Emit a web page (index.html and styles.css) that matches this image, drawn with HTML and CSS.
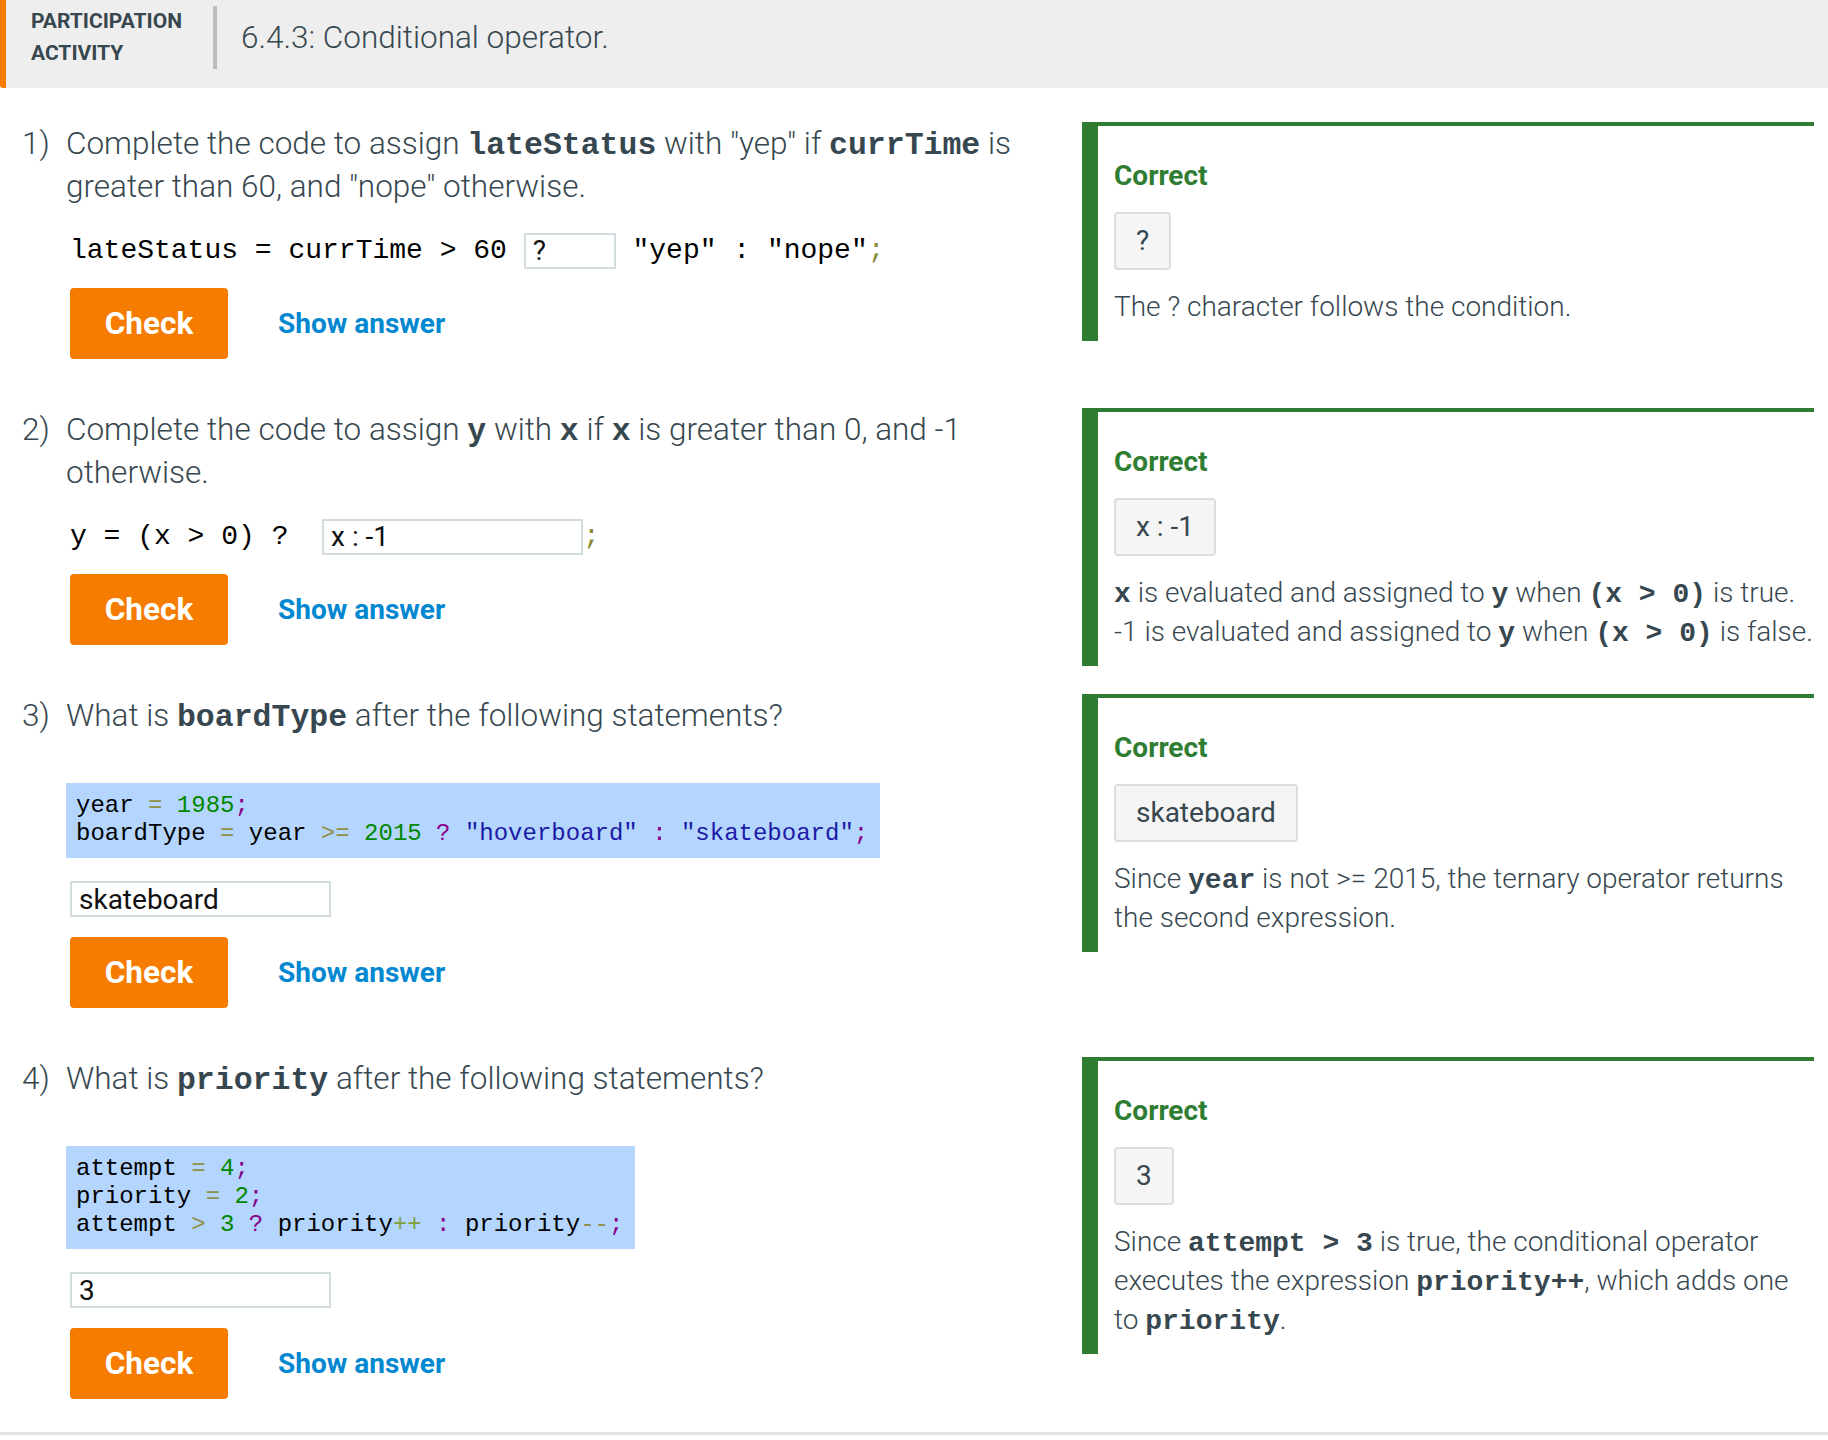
FILE: index.html
```html
<!DOCTYPE html>
<html lang="en">
<head>
<meta charset="utf-8">
<title>6.4.3: Conditional operator.</title>
<link rel="stylesheet" href="styles.css">
</head>
<body>
<div class="activity">
  <header class="act-header">
    <div class="act-label">PARTICIPATION<br>ACTIVITY</div>
    <div class="act-title">6.4.3: Conditional operator.</div>
  </header>

  <div class="questions">
    <div class="q-row">
      <div class="q-main">
        <div class="q-prompt">
          <span class="q-num">1)</span>
          <div class="q-text">Complete the code to assign <code>lateStatus</code> with "yep" if <code>currTime</code> is greater than 60, and "nope" otherwise.</div>
        </div>
        <div class="code-line">lateStatus = currTime &gt; 60 <input class="blank blank-sm" type="text" value="?"> "yep" : "nope"<span class="semi">;</span></div>
        <div class="actions"><button class="check">Check</button><a class="show">Show answer</a></div>
      </div>
      <div class="feedback">
        <div class="fb-title">Correct</div>
        <div class="chip">?</div>
        <p class="fb-text">The ? character follows the condition.</p>
      </div>
    </div>

    <div class="q-row">
      <div class="q-main">
        <div class="q-prompt">
          <span class="q-num">2)</span>
          <div class="q-text">Complete the code to assign <code>y</code> with <code>x</code> if <code>x</code> is greater than 0, and -1 otherwise.</div>
        </div>
        <div class="code-line">y = (x &gt; 0) ?&nbsp; <input class="blank blank-lg" type="text" value="x : -1"><span class="semi">;</span></div>
        <div class="actions"><button class="check">Check</button><a class="show">Show answer</a></div>
      </div>
      <div class="feedback">
        <div class="fb-title">Correct</div>
        <div class="chip">x : -1</div>
        <p class="fb-text"><span class="nowrap"><code>x</code> is evaluated and assigned to <code>y</code> when <code>(x &gt; 0)</code> is true.</span><br><span class="nowrap">-1 is evaluated and assigned to <code>y</code> when <code>(x &gt; 0)</code> is false.</span></p>
      </div>
    </div>

    <div class="q-row">
      <div class="q-main">
        <div class="q-prompt">
          <span class="q-num">3)</span>
          <div class="q-text">What is <code>boardType</code> after the following statements?</div>
        </div>
        <pre class="code-block">year <span class="op">=</span> <span class="num">1985</span><span class="pu">;</span>
boardType <span class="op">=</span> year <span class="op">&gt;=</span> <span class="num">2015</span> <span class="pu">?</span> <span class="str">"hoverboard"</span> <span class="pu">:</span> <span class="str">"skateboard"</span><span class="pu">;</span></pre>
        <input class="blank blank-lg answer" type="text" value="skateboard">
        <div class="actions"><button class="check">Check</button><a class="show">Show answer</a></div>
      </div>
      <div class="feedback">
        <div class="fb-title">Correct</div>
        <div class="chip">skateboard</div>
        <p class="fb-text">Since <code>year</code> is not &gt;= 2015, the ternary operator returns the second expression.</p>
      </div>
    </div>

    <div class="q-row">
      <div class="q-main">
        <div class="q-prompt">
          <span class="q-num">4)</span>
          <div class="q-text">What is <code>priority</code> after the following statements?</div>
        </div>
        <pre class="code-block">attempt <span class="op">=</span> <span class="num">4</span><span class="pu">;</span>
priority <span class="op">=</span> <span class="num">2</span><span class="pu">;</span>
attempt <span class="op">&gt;</span> <span class="num">3</span> <span class="pu">?</span> priority<span class="op2">++</span> <span class="pu">:</span> priority<span class="op">--</span><span class="pu">;</span></pre>
        <input class="blank blank-lg answer" type="text" value="3">
        <div class="actions"><button class="check">Check</button><a class="show">Show answer</a></div>
      </div>
      <div class="feedback">
        <div class="fb-title">Correct</div>
        <div class="chip">3</div>
        <p class="fb-text">Since <code>attempt &gt; 3</code> is true, the conditional operator executes the expression <code>priority++</code>, which adds one to <code>priority</code>.</p>
      </div>
    </div>
  </div>
</div>
</body>
</html>
```

FILE: styles.css
```css
* { box-sizing: border-box; }

html, body {
  margin: 0;
  padding: 0;
  background: #ffffff;
}

body {
  font-family: Roboto, "Noto Sans", "Liberation Sans", sans-serif;
  color: #37474f;
}

code, pre, .code-line {
  font-family: "Liberation Mono", "Courier New", monospace;
}

.activity {
  border-bottom: 3px solid #e2e2e2;
  box-shadow: 0 2px 3px rgba(0, 0, 0, 0.08);
}

/* Header */
.act-header {
  display: flex;
  align-items: flex-start;
  height: 88px;
  background: #eeeeee;
  border-left: 6px solid #f57c00;
  border-bottom-left-radius: 3px;
  padding: 5px 0 0 25px;
}

.act-label {
  width: 182px;
  font-weight: 700;
  font-size: 21px;
  line-height: 32px;
  color: #37474f;
}

.act-title {
  display: flex;
  align-items: center;
  height: 63px;
  margin-top: 1px;
  padding-left: 24px;
  border-left: 4px solid #bdbdbd;
  font-weight: 300;
  font-size: 31.5px;
  color: #37474f;
}

/* Questions */
.questions {
  padding-top: 34px;
}

.q-row {
  display: flex;
  align-items: flex-start;
}

.q-main {
  flex: 1;
  min-width: 0;
  padding: 0 20px 49px 22px;
}

.q-row:last-child .q-main {
  padding-bottom: 33px;
}

.q-prompt {
  display: flex;
  font-weight: 300;
  font-size: 31.5px;
  line-height: 43px;
}

.q-num {
  flex: 0 0 44px;
}

.q-text {
  flex: 1;
}

.q-text code {
  font-weight: 700;
  font-size: 31.5px;
  line-height: 1;
  color: #37474f;
}

.code-line {
  margin: 18px 0 0 48px;
  height: 50px;
  line-height: 50px;
  font-size: 28px;
  color: #000000;
  white-space: pre;
}

.semi {
  color: #8b8b3a;
}

.blank {
  height: 36px;
  border: 2px solid #d3dcdf;
  border-radius: 0;
  padding: 0 0 0 7px;
  margin: 0;
  font-family: Roboto, "Noto Sans", sans-serif;
  font-size: 28px;
  font-weight: 400;
  color: #111111;
  background: #ffffff;
  vertical-align: middle;
  outline: none;
}

.blank-sm { width: 92px; }
.blank-lg { width: 261px; }

.answer {
  display: block;
  height: 36px;
  margin: 23px 0 0 48px;
}

.code-block {
  display: inline-block;
  margin: 46px 0 0 44px;
  padding: 9px 12px 10px 10px;
  background: #b4d5fd;
  font-size: 24px;
  line-height: 28px;
  color: #000000;
  white-space: pre;
}

.op { color: #8f8f45; }
.op2 { color: #7f9f3a; }
.num { color: #008800; }
.pu { color: #880088; }
.str { color: #1a1aa6; }

.actions {
  display: flex;
  align-items: center;
  margin: 12px 0 0 48px;
}

.answer + .actions {
  margin-top: 20px;
}

.check {
  width: 158px;
  height: 71px;
  border: none;
  border-radius: 4px;
  background: #f57c00;
  color: #ffffff;
  font-family: Roboto, "Noto Sans", sans-serif;
  font-weight: 700;
  font-size: 31.5px;
  padding: 0;
  cursor: pointer;
}

.show {
  margin-left: 50px;
  font-weight: 700;
  font-size: 28px;
  color: #0288d1;
  cursor: pointer;
}

/* Feedback panel */
.feedback {
  flex: 0 0 732px;
  width: 732px;
  margin-right: 14px;
  border-top: 4px solid #2e7d32;
  border-left: 16px solid #2e7d32;
  padding: 30px 0 15px 16px;
  font-size: 28px;
  line-height: 39px;
}

.fb-title {
  font-weight: 700;
  color: #2e7d32;
}

.chip {
  display: inline-block;
  margin-top: 17px;
  padding: 10px 20px;
  line-height: 34px;
  border: 2px solid #dddddd;
  border-radius: 4px;
  background: #f5f5f5;
  font-weight: 400;
  color: #37474f;
}

.fb-text {
  margin: 17px 0 0 0;
  font-weight: 300;
  color: #37474f;
}

.fb-text code {
  font-weight: 700;
  font-size: 28px;
  line-height: 1;
  color: #37474f;
}

.nowrap {
  white-space: nowrap;
}
```
